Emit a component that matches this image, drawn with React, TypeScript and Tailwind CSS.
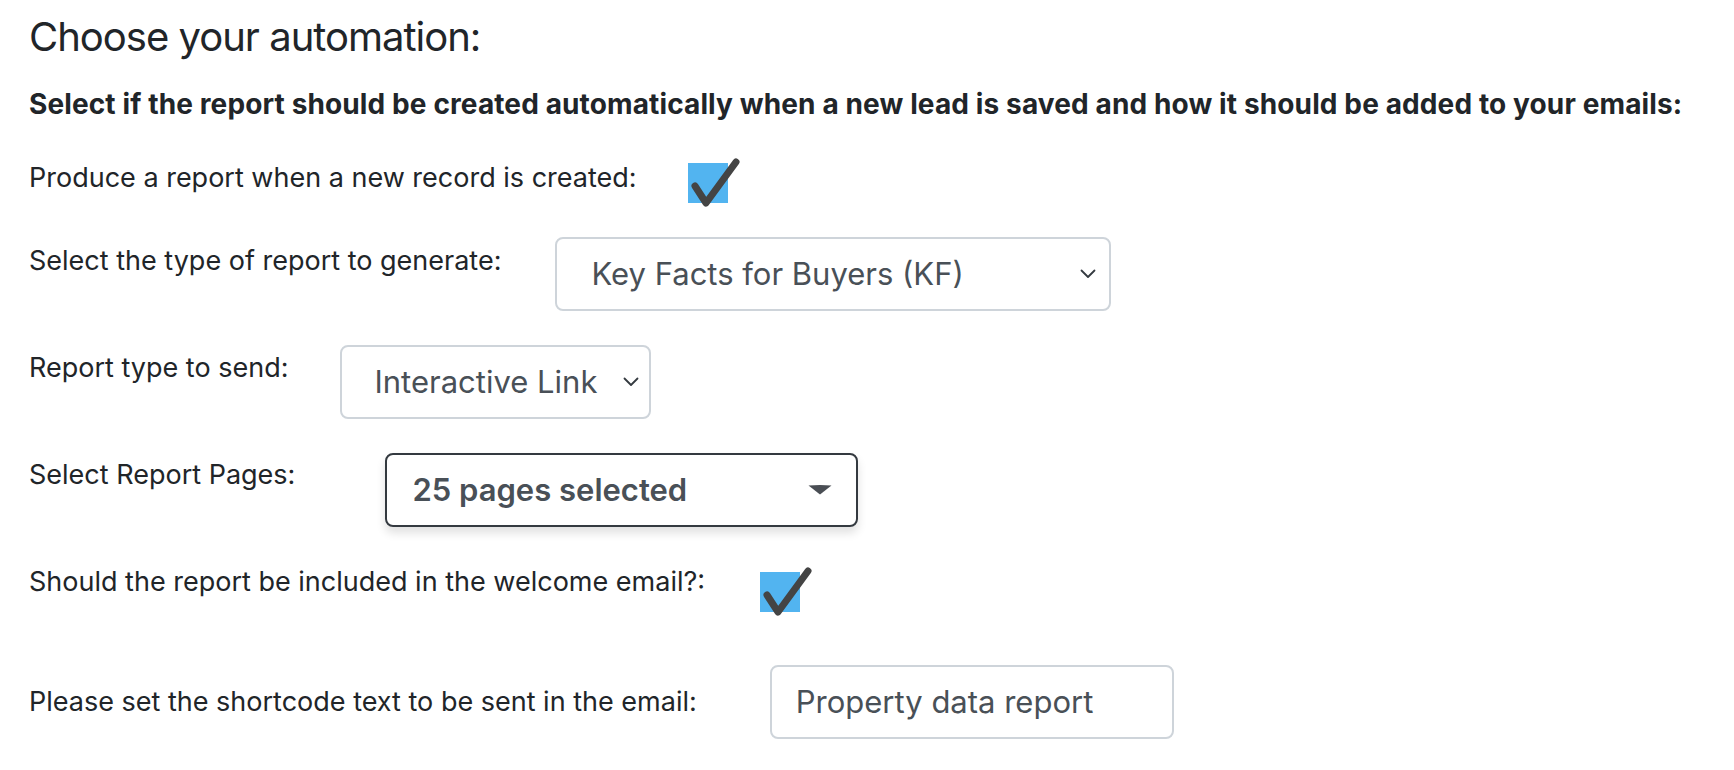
import React from "react";

function Check() {
  return (
    <div className="relative w-[40px] h-[40px] bg-[#52b4f0]">
      <svg
        className="absolute left-[-4px] top-[-6px]"
        width="56"
        height="54"
        viewBox="-4 -6 56 54"
      >
        <path
          d="M7 23 L18 40 L48 -1"
          fill="none"
          stroke="#444444"
          strokeWidth="7"
          strokeLinecap="round"
          strokeLinejoin="round"
        />
      </svg>
    </div>
  );
}

function Chevron() {
  return (
    <svg width="16" height="10" viewBox="0 0 16 10" className="shrink-0">
      <path d="M1.5 1.5 L8 8 L14.5 1.5" fill="none" stroke="#343a40" strokeWidth="1.8" strokeLinecap="round" strokeLinejoin="round" />
    </svg>
  );
}

export default function App() {
  const font = { fontFamily: "Inter, 'Noto Sans', sans-serif" };
  return (
    <div className="w-[1734px] h-[770px] bg-white text-[#212529] pl-[29px] pt-[13px]" style={font}>
      <h3 className="text-[40px] leading-[48px] font-normal tracking-[-1px]">Choose your automation:</h3>
      <p className="mt-[28px] text-[28px] leading-[30px] font-bold tracking-[0.12px]">
        Select if the report should be created automatically when a new lead is saved and how it should be added to your emails:
      </p>

      <div className="mt-[39px] flex items-start text-[27px] leading-[40px]">
        <span className="mr-[51px]">Produce a report when a new record is created:</span>
        <div className="mt-[5px]"><Check /></div>
      </div>

      <div className="mt-[34px] flex items-start text-[27px] leading-[40px]">
        <span className="mt-[4px] mr-[54px]">Select the type of report to generate:</span>
        <div className="w-[556px] h-[74px] border-2 border-[#ced4da] rounded-[8px] flex items-center justify-between pl-[34px] pr-[13px] text-[#495057] text-[31px]">
          <span>Key Facts for Buyers (KF)</span>
          <Chevron />
        </div>
      </div>

      <div className="mt-[34px] flex items-start text-[27px] leading-[40px]">
        <span className="mt-[3px] mr-[52px]">Report type to send:</span>
        <div className="w-[311px] h-[74px] border-2 border-[#ced4da] rounded-[8px] flex items-center justify-between pl-[32px] pr-[10px] text-[#495057] text-[31px]">
          <span>Interactive Link</span>
          <Chevron />
        </div>
      </div>

      <div className="mt-[34px] flex items-start text-[27px] leading-[40px]">
        <span className="mt-[2px] mr-[90px]">Select Report Pages:</span>
        <div className="w-[473px] h-[74px] border-2 border-[#343a40] rounded-[8px] shadow-[0_6px_10px_rgba(0,0,0,0.12)] flex items-center justify-between pl-[25px] pr-[24px] text-[#495057] text-[31px] font-semibold">
          <span>25 pages selected</span>
          <svg width="24" height="10" viewBox="0 0 24 10">
            <path d="M0.5 0.5 Q12 -0.5 23.5 0.5 L12 9.5 Z" fill="#4a4e54" />
          </svg>
        </div>
      </div>

      <div className="mt-[35px] flex items-start text-[27px] leading-[40px]">
        <span className="mr-[55px]">Should the report be included in the welcome email?:</span>
        <div className="mt-[10px]"><Check /></div>
      </div>

      <div className="mt-[53px] flex items-start text-[27px] leading-[40px]">
        <span className="mt-[17px] mr-[73px]">Please set the shortcode text to be sent in the email:</span>
        <div className="w-[404px] h-[74px] border-2 border-[#ced4da] rounded-[8px] flex items-center pl-[24px] text-[#495057] text-[31px]">
          <span>Property data report</span>
        </div>
      </div>
    </div>
  );
}
